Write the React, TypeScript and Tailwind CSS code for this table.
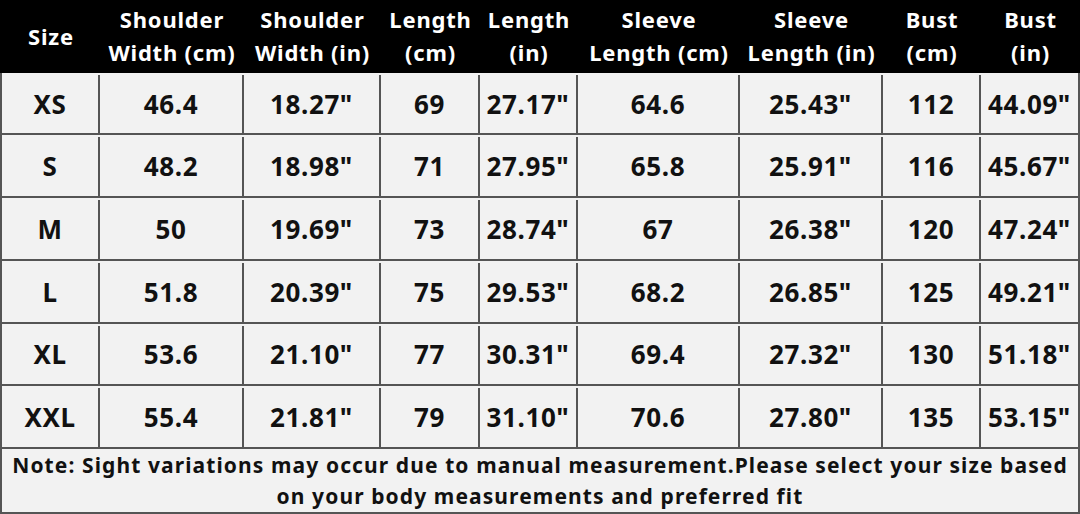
import React from 'react';

type Row = {
  size: string;
  values: string[];
};

const headers: string[][] = [
  ['Size'],
  ['Shoulder', 'Width (cm)'],
  ['Shoulder', 'Width (in)'],
  ['Length', '(cm)'],
  ['Length', '(in)'],
  ['Sleeve', 'Length (cm)'],
  ['Sleeve', 'Length (in)'],
  ['Bust', '(cm)'],
  ['Bust', '(in)'],
];

const rows: Row[] = [
  { size: 'XS', values: ['46.4', '18.27"', '69', '27.17"', '64.6', '25.43"', '112', '44.09"'] },
  { size: 'S', values: ['48.2', '18.98"', '71', '27.95"', '65.8', '25.91"', '116', '45.67"'] },
  { size: 'M', values: ['50', '19.69"', '73', '28.74"', '67', '26.38"', '120', '47.24"'] },
  { size: 'L', values: ['51.8', '20.39"', '75', '29.53"', '68.2', '26.85"', '125', '49.21"'] },
  { size: 'XL', values: ['53.6', '21.10"', '77', '30.31"', '69.4', '27.32"', '130', '51.18"'] },
  { size: 'XXL', values: ['55.4', '21.81"', '79', '31.10"', '70.6', '27.80"', '135', '53.15"'] },
];

const cols = 'grid grid-cols-[98px_144px_137px_99px_98px_162px_143px_98px_1fr]';

const App: React.FC = () => {
  return (
    <div
      className="w-[1080px] h-[514px] bg-[#f2f2f2] overflow-hidden flex flex-col"
      style={{ fontFamily: '"Noto Sans", "Open Sans", sans-serif' }}
    >
      {/* Header */}
      <div className={`${cols} h-[73px] bg-black text-white font-bold text-[22px] tracking-[0.8px] leading-[33px] pl-[2px]`}>
        {headers.map((h, i) => (
          <div key={i} className="flex flex-col items-center justify-center text-center whitespace-nowrap">
            {h.map((line) => (
              <span key={line}>{line}</span>
            ))}
          </div>
        ))}
      </div>

      {/* Body rows */}
      {rows.map((row) => (
        <div
          key={row.size}
          className={`${cols} h-[63px] border-l-2 border-r-2 border-b-2 border-[#555] text-[#111] font-bold text-[26px] tracking-[0.6px] pt-[2px]`}
        >
          <div className="flex items-center justify-center border-r-2 border-[#555]">{row.size}</div>
          {row.values.map((v, i) => (
            <div
              key={i}
              className={`flex items-center justify-center whitespace-nowrap ${i < row.values.length - 1 ? 'border-r-2 border-[#555]' : ''}`}
            >
              {v}
            </div>
          ))}
        </div>
      ))}

      {/* Note */}
      <div className="flex-1 border-l-2 border-r-2 border-b-2 border-[#555] text-center text-[#111] font-bold text-[21px] tracking-[1.1px] leading-[31px] pt-[1px] whitespace-nowrap">
        Note: Sight variations may occur due to manual measurement.Please select your size based
        <br />
        on your body measurements and preferred fit
      </div>
    </div>
  );
};

export default App;
